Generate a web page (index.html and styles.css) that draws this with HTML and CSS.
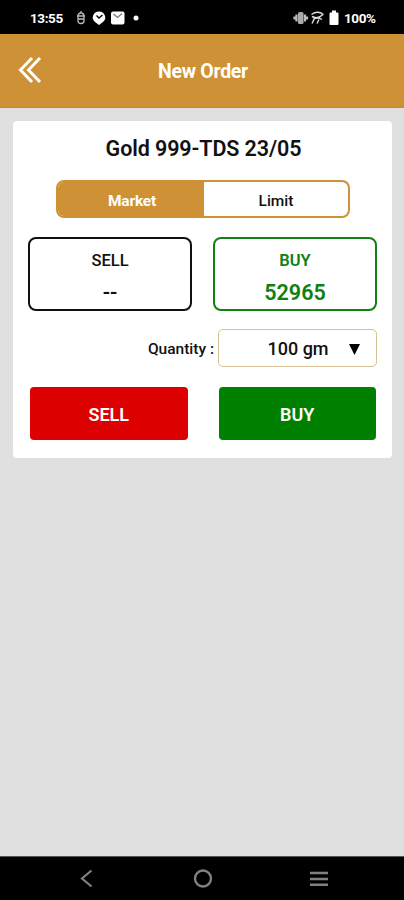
FILE: index.html
```html
<!DOCTYPE html>
<html lang="en">
<head>
  <meta charset="UTF-8">
  <meta name="viewport" content="width=device-width, initial-scale=1.0">
  <title>New Order</title>
  <link rel="stylesheet" href="styles.css">
</head>
<body>
  <div class="statusbar">
    <span class="time">13:55</span>
    <svg class="status-left" width="66" height="16" viewBox="0 0 66 16">
      <path d="M2 6h8M2.500 9h7M3 6.500q0-3.500 3-3.500t3 3.500v4q0 3-3 3t-3-3zM6 1v2" fill="none" stroke="#bbb" stroke-width="1.300"/>
      <path d="M24 1.500a6.500 6 0 0 1 4 10.500l-4 3-4-3a6.500 6 0 0 1 4-10.500z" fill="#fff"/>
      <path d="M21.500 5.500l2.500 2.500 3.500-3" fill="none" stroke="#000" stroke-width="1.300"/>
      <rect x="36" y="1.500" width="13.500" height="13" rx="2" fill="#fff"/>
      <path d="M38.500 4l4 3.500 4.500-4" fill="none" stroke="#777" stroke-width="1.200"/>
      <circle cx="61" cy="8" r="2.500" fill="#fff"/>
    </svg>
    <svg class="status-right" width="48" height="16" viewBox="0 0 48 16">
      <rect x="5" y="2" width="5.500" height="12" rx="1.500" fill="#aaa"/>
      <path d="M3.500 4.500v7M1.500 6.500v3M12 4.500v7M14 6.500v3" stroke="#bbb" stroke-width="2.200"/>
      <path d="M18.500 4.500q6-4.500 12 0M19 6.500q6 3 11-2M20 9.500q5-3 9 0M19 13.500l2-4M24 13.500l2-4" fill="none" stroke="#ddd" stroke-width="1.400"/>
      <path d="M39 .5h4v2h1.500q1 0 1 1v10.500q0 1-1 1h-7q-1 0-1-1v-10.500q0-1 1-1h1.500z" fill="#fff"/>
    </svg>
    <span class="battery">100%</span>
  </div>

  <div class="header">
    <svg class="back" width="26" height="28" viewBox="0 0 26 28">
      <path d="M14 2L2.500 14l11.500 12M22 2L10.500 14l11.500 12" fill="none" stroke="#fff" stroke-width="3"/>
    </svg>
    <h1>New Order</h1>
  </div>

  <div class="content">
    <div class="card">
      <h2>Gold 999-TDS 23/05</h2>

      <div class="tabs">
        <div class="tab active">Market</div>
        <div class="tab">Limit</div>
      </div>

      <div class="prices">
        <div class="price">
          <span class="label">SELL</span>
          <span class="value">--</span>
        </div>
        <div class="price buy">
          <span class="label">BUY</span>
          <span class="value">52965</span>
        </div>
      </div>

      <div class="quantity">
        <span class="quantity-label">Quantity :</span>
        <div class="select">
          <span>100 gm</span>
          <svg class="arrow" width="11" height="11" viewBox="0 0 11 11"><path d="M0 0h11L5.500 11z"/></svg>
        </div>
      </div>

      <div class="actions">
        <button class="btn btn-sell">SELL</button>
        <button class="btn btn-buy">BUY</button>
      </div>
    </div>
  </div>

  <div class="navbar">
    <svg width="20" height="20" viewBox="0 0 20 20"><path d="M14.500 1.500L5 9.500l9.500 8" fill="none" stroke="#808080" stroke-width="2.200"/></svg>
    <svg width="20" height="20" viewBox="0 0 20 20"><circle cx="10" cy="9.500" r="8" fill="none" stroke="#808080" stroke-width="2.400"/></svg>
    <svg width="20" height="20" viewBox="0 0 20 20"><path d="M1 4h18M1 10h18M1 15.700h18" stroke="#808080" stroke-width="2.500"/></svg>
  </div>
</body>
</html>
```

FILE: styles.css
```css
* { box-sizing: border-box; }
body { margin: 0; height: 900px; display: flex; flex-direction: column; background: #e0e0e0; font-family: Roboto, "Liberation Sans", sans-serif; color: #111; }
h1, h2 { margin: 0; }

.statusbar { height: 34px; padding: 1px 28px 0 30px; display: flex; align-items: center; background: #000; color: #fff; font-size: 13.5px; font-weight: 700; line-height: 16px; letter-spacing: -0.4px; }
.time { width: 45px; }
.battery { width: 32px; white-space: nowrap; }
.status-right { margin-left: auto; margin-right: 3px; }

.header { height: 74px; padding: 0 17px 1px 18px; display: grid; grid-template-columns: 26px 1fr 26px; align-items: center; background: #cf9136; border-bottom: 1px solid #b98b4c; color: #fff; }
.header h1 { font-size: 19.5px; line-height: 24px; font-weight: 700; letter-spacing: -0.3px; text-align: center; padding: 4px 0 0 1px; }

.content { flex: 1; padding: 13px 12px 0 13px; }
.card { height: 337px; padding: 15px; background: #fff; border-radius: 4px; }
.card h2 { font-size: 21.5px; line-height: 26px; font-weight: 600; letter-spacing: -0.1px; text-align: center; padding-left: 2px; }

.tabs { width: 294px; height: 38px; margin: 18px auto 0; display: flex; border: 2px solid #cf9136; border-radius: 8px; overflow: hidden; }
.tab { flex: 1; display: flex; align-items: center; justify-content: center; padding: 3px 0 0 1px; font-size: 15.5px; font-weight: 500; }
.tab.active { background: #cf9136; color: #fff; font-weight: 700; letter-spacing: -0.2px; padding-left: 3px; }

.prices { margin-top: 19px; display: grid; grid-template-columns: 1fr 1fr; gap: 21px; }
.price { height: 74px; padding-top: 12px; display: flex; flex-direction: column; align-items: center; border: 2px solid #111; border-radius: 8px; font-weight: 500; }
.price.buy { border-color: #108010; color: #108010; font-weight: 600; }
.label { font-size: 16.5px; line-height: 20px; }
.value { margin-top: 9px; font-size: 21.5px; line-height: 26px; }

.quantity { margin-top: 18px; display: flex; align-items: center; justify-content: flex-end; }
.quantity-label { font-size: 15.5px; font-weight: 500; margin-right: 4px; padding-top: 1px; }
.select { width: 159px; height: 38px; display: grid; grid-template-columns: 1fr 31px; align-items: center; border: 1px solid #d5c08f; border-radius: 5px; font-size: 18px; font-weight: 500; text-align: center; padding-left: 32px; }
.arrow { margin: 2px 0 0 4px; }

.actions { margin: 20px 1px 0 2px; display: grid; grid-template-columns: 1fr 1fr; gap: 31px; }
.btn { height: 53px; padding: 1px 0 0; border: none; border-radius: 4px; color: #fff; font: 600 18px Roboto, "Liberation Sans", sans-serif; cursor: pointer; }
.btn-sell { background: #dc0000; }
.btn-buy { background: #008000; }

.navbar { height: 44px; border-top: 1px solid #555; padding: 0 75px 0 77px; display: flex; align-items: center; justify-content: space-between; background: #000; }
```
